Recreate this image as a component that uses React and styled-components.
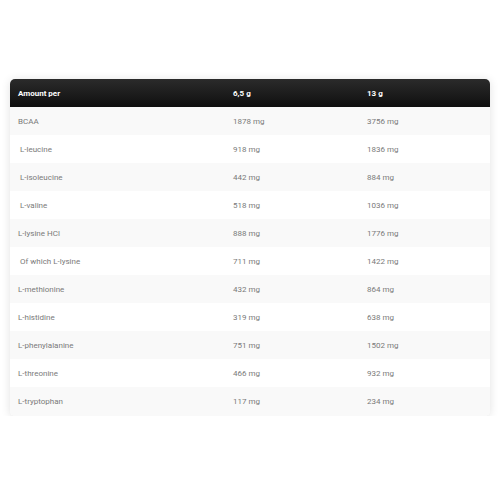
import React from "react";
import styled, { createGlobalStyle } from "styled-components";

const Global = createGlobalStyle`
  html, body { margin: 0; padding: 0; background: #ffffff; }
  body { font-family: Roboto, "Liberation Sans", sans-serif; }
`;

const Page = styled.div`
  padding: 79px 10px 0 10px;
`;

const Card = styled.div`
  border-radius: 5px;
  box-shadow: 0 1px 10px rgba(0, 0, 0, 0.12);
  overflow: hidden;
  background: #fff;
`;

const Grid = styled.div`
  display: grid;
  grid-template-columns: 215px 134px 1fr;
`;

const HeadRow = styled(Grid)`
  height: 28px;
  align-items: center;
  background: linear-gradient(180deg, #2b2b2b 0%, #0f0f0f 100%);
`;

const HeadCell = styled.div`
  padding-left: 8px;
  color: #ffffff;
  font-size: 8px;
  font-weight: 700;
`;

const Row = styled(Grid)`
  height: 28px;
  align-items: center;
  background: ${(p) => (p.$alt ? "#f9f9f9" : "#ffffff")};
  &:last-child { height: 29px; }
`;

const Cell = styled.div`
  padding-left: ${(p) => (p.$indent ? "10px" : "8px")};
  color: #7a7a7a;
  font-size: 8px;
  white-space: pre;
`;

const rows = [
  ["BCAA", "1878 mg", "3756 mg", false],
  ["L-leucine", "918 mg", "1836 mg", true],
  ["L-isoleucine", "442 mg", "884 mg", true],
  ["L-valine", "518 mg", "1036 mg", true],
  ["L-lysine HCl", "888 mg", "1776 mg", false],
  ["Of which L-lysine", "711 mg", "1422 mg", true],
  ["L-methionine", "432 mg", "864 mg", false],
  ["L-histidine", "319 mg", "638 mg", false],
  ["L-phenylalanine", "751 mg", "1502 mg", false],
  ["L-threonine", "466 mg", "932 mg", false],
  ["L-tryptophan", "117 mg", "234 mg", false],
];

export default function App() {
  return (
    <>
      <Global />
      <Page>
        <Card>
          <HeadRow>
            <HeadCell>Amount per</HeadCell>
            <HeadCell>6,5 g</HeadCell>
            <HeadCell>13 g</HeadCell>
          </HeadRow>
          {rows.map(([name, a, b, indent], i) => (
            <Row key={name} $alt={i % 2 === 0}>
              <Cell $indent={indent}>{name}</Cell>
              <Cell>{a}</Cell>
              <Cell>{b}</Cell>
            </Row>
          ))}
        </Card>
      </Page>
    </>
  );
}
